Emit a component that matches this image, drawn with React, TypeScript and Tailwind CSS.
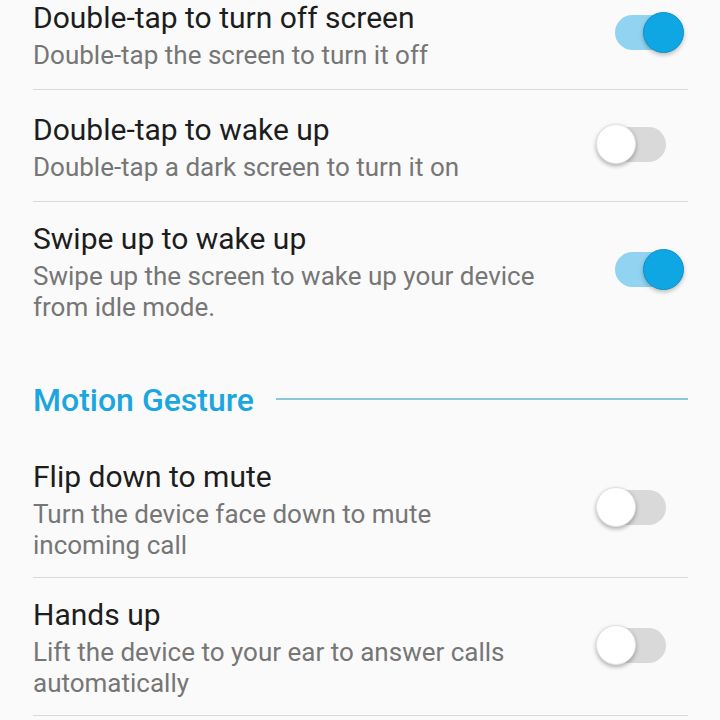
import React from 'react';

type Item = {
  title: string;
  lines: string[];
  on: boolean;
  divider: boolean;
};

const screenGestures: Item[] = [
  { title: 'Double-tap to turn off screen', lines: ['Double-tap the screen to turn it off'], on: true, divider: true },
  { title: 'Double-tap to wake up', lines: ['Double-tap a dark screen to turn it on'], on: false, divider: true },
  { title: 'Swipe up to wake up', lines: ['Swipe up the screen to wake up your device', 'from idle mode.'], on: true, divider: false },
];

const motionGestures: Item[] = [
  { title: 'Flip down to mute', lines: ['Turn the device face down to mute', 'incoming call'], on: false, divider: true },
  { title: 'Hands up', lines: ['Lift the device to your ear to answer calls', 'automatically'], on: false, divider: true },
];

function Toggle({ on }: { on: boolean }) {
  return (
    <div className="relative w-[88px] h-[41px] mr-[4px] mb-[6px] shrink-0">
      {on ? (
        <>
          <div className="absolute left-[19px] top-[3px] w-[67px] h-[35px] rounded-full bg-[#92d3f1]" />
          <div className="absolute left-[47px] top-0 w-[41px] h-[41px] rounded-full bg-[#0fa6e4] border border-[#0b93cc] shadow-[0_2px_4px_rgba(0,0,0,0.25)]" />
        </>
      ) : (
        <>
          <div className="absolute left-[2px] top-[3px] w-[68px] h-[35px] rounded-full bg-[#d9d9d9]" />
          <div className="absolute left-0 top-0 w-[40px] h-[40px] rounded-full bg-white border border-[#e2e2e2] shadow-[0_2px_4px_rgba(0,0,0,0.3)]" />
        </>
      )}
    </div>
  );
}

function Row({ item }: { item: Item }) {
  return (
    <div
      className={`flex items-center min-h-[112px] pt-[19px] pb-[16px] ${item.divider ? 'border-b border-[#dadada]' : ''}`}
    >
      <div className="flex-1 flex flex-col justify-center whitespace-nowrap">
        <div className="text-[30px] leading-[36px] text-[#1d1d1d]">{item.title}</div>
        <div className="mt-[4px] text-[26px] leading-[31px] text-[#767676]">
          {item.lines.map((l, i) => (
            <div key={i}>{l}</div>
          ))}
        </div>
      </div>
      <Toggle on={item.on} />
    </div>
  );
}

export default function App() {
  return (
    <div className="w-[720px] h-[720px] overflow-hidden bg-[#fafafa] font-['Roboto',sans-serif]">
      <div className="-mt-[22px] pl-[33px] pr-[32px]">
        {screenGestures.map(item => (
          <Row key={item.title} item={item} />
        ))}

        <div className="flex items-center pt-[44px] pb-[23px]">
          <span className="text-[32px] leading-[34px] font-medium text-[#1ba6e0]">Motion Gesture</span>
          <div className="flex-1 h-[2px] ml-[22px] mt-[-2px] bg-[#8cc8dc]" />
        </div>

        {motionGestures.map(item => (
          <Row key={item.title} item={item} />
        ))}
      </div>
    </div>
  );
}
